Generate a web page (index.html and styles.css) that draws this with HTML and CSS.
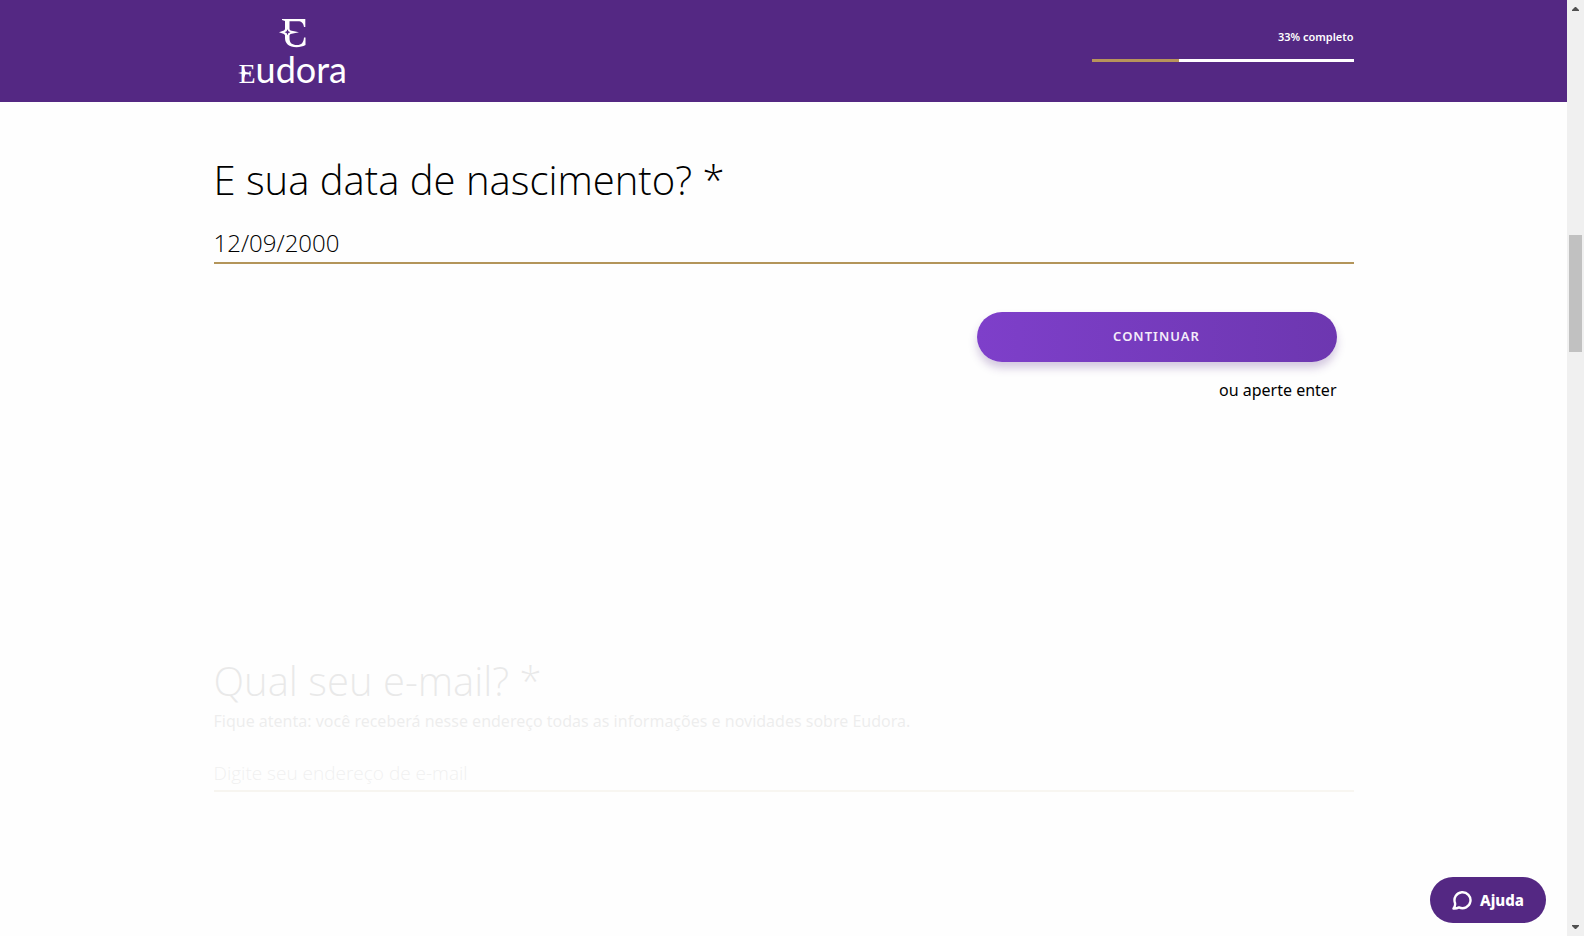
FILE: index.html
```html
<!DOCTYPE html>
<html lang="pt-BR">
<head>
<meta charset="utf-8">
<title>Eudora</title>
<link rel="stylesheet" href="styles.css">
</head>
<body>
<div class="window">
  <div class="page">
    <header class="header">
      <div class="container header-row">
        <div class="logo">
          <svg class="emblem" viewBox="0 0 28 29" aria-hidden="true">
            <path d="M3 0H26.300V8H25C24.500 4 22.500 2.200 19 2.200H10.500V10.300L11.500 11.400L20 13.200L11.500 15L10.500 16.200V19C10.500 24 13 26 18 26C22.500 26 24.600 23.500 25 18.500H26.500V26C24 27.400 21 28.200 17.500 28.200C10 28.200 6 24.500 6 19V16.200L5 15L0 13.200L5 11.400L6 10.300V2L3 1Z M8.500 10.200L7.600 12.300L5.500 13.200L7.600 14.100L8.500 16.200L9.400 14.100L11.500 13.200L9.400 12.300Z" fill-rule="evenodd"/>
          </svg>
          <div class="wordmark"><span class="wordmark-initial">E<svg class="spark" viewBox="0 0 14 10" aria-hidden="true"><path d="M0 5L4.500 4L6 0L7.500 4L14 5L7.500 6L6 10L4.500 6Z"/></svg></span>udora</div>
        </div>
        <div class="progress">
          <span class="progress-label" id="progress-label">33% completo</span>
          <div class="progress-track" role="progressbar" aria-labelledby="progress-label" aria-valuenow="33"><div class="progress-fill" style="width:33.333%"></div></div>
        </div>
      </div>
    </header>
    <main class="container">
      <section class="question">
        <label class="title" for="birth">E sua data de nascimento? *</label>
        <input class="field field-date" id="birth" type="text" value="12/09/2000">
        <div class="actions">
          <button class="continue" type="button">CONTINUAR</button>
          <span class="hint">ou aperte enter</span>
        </div>
      </section>
      <section class="question question-next">
        <label class="title" for="email">Qual seu e-mail? *</label>
        <p class="description">Fique atenta: você receberá nesse endereço todas as informações e novidades sobre Eudora.</p>
        <input class="field field-email" id="email" type="email" placeholder="Digite seu endereço de e-mail">
      </section>
    </main>
    <button class="help" type="button">
      <svg class="help-icon" viewBox="0 0 20 20" aria-hidden="true"><path d="M3 13A8 8 0 1 1 7 17.400Q4.500 18.800 1.500 18.600Q3.600 16 3 13Z"/></svg>
      Ajuda
    </button>
  </div>
  <div class="scrollbar" aria-hidden="true">
    <svg class="arrow" viewBox="0 0 7 4"><path d="M0 4V3L3 0H4L7 3V4Z"/></svg>
    <div class="rail"><div class="thumb"></div></div>
    <svg class="arrow" viewBox="0 0 7 4"><path d="M0 0V1L3 4H4L7 1V0Z"/></svg>
  </div>
</div>
</body>
</html>
```
FILE: styles.css
```css
* { box-sizing: border-box; }
body {
  margin: 0;
  background: #fefefe;
  color: #000;
  font-family: "Noto Sans", "Open Sans", sans-serif;
}
.window { display: grid; grid-template-columns: 1fr 17px; height: 100vh; overflow: hidden; }
.page { position: relative; overflow: hidden; }
.container { max-width: 1140px; margin: 0 auto; }
.header { background: #542883; height: 102px; }
.header-row { display: flex; justify-content: space-between; align-items: flex-start; }
.logo { display: flex; flex-direction: column; align-items: center; padding: 19px 0 0 25px; color: #fff; }
.emblem { width: 28px; height: 29px; fill: #fff; }
.wordmark { font: 400 36px/42px Lato, sans-serif; }
.wordmark-initial { position: relative; font: 400 28px/42px "Liberation Serif", serif; }
.spark { position: absolute; left: -1px; bottom: 11px; width: 14px; height: 10px; fill: #fff; }
.progress { width: 262px; padding-top: 27px; display: flex; flex-direction: column; gap: 12px; }
.progress-label { text-align: right; color: #fff; font-size: 11px; line-height: 20px; font-weight: 600; }
.progress-track { height: 3px; background: #fff; }
.progress-fill { height: 3px; background: #b8945a; }
.question { display: flex; flex-direction: column; padding-top: 50px; height: 501px; }
.question-next { opacity: 0.08; }
.title { font: 300 40px/56px "Open Sans", sans-serif; }
.field {
  width: 100%;
  margin: 20px 0 0;
  padding: 0 0 6px;
  height: 36px;
  border: 0;
  border-bottom: 2px solid #b3955a;
  background: transparent;
  color: #000;
  outline: none;
  font: 300 24px/28px "Open Sans", sans-serif;
}
.field-email { margin-top: 23px; padding: 0; font-size: 19px; }
.field-email::placeholder { color: #555; opacity: 1; }
.actions { display: flex; flex-direction: column; align-items: flex-end; gap: 16px; padding: 48px 17px 0 0; }
.continue {
  width: 360px;
  height: 50px;
  padding: 0 0 2px;
  border: 0;
  border-radius: 25px;
  background: linear-gradient(90deg, #7e3fca, #6d37b0);
  box-shadow: 0 6px 8px rgba(84, 40, 131, 0.25);
  color: #f4edfa;
  font: 600 13px/20px "Noto Sans", sans-serif;
  letter-spacing: 1px;
}
.hint { font-size: 16px; line-height: 24px; }
.description { margin: 0; color: #333; font-size: 16px; line-height: 24px; }
.help {
  position: absolute;
  right: 21px;
  bottom: 13px;
  display: flex;
  align-items: center;
  justify-content: center;
  gap: 8px;
  width: 116px;
  height: 46px;
  border: 0;
  border-radius: 23px;
  background: #542883;
  color: #fff;
  font: 800 15px/20px "Noto Sans", sans-serif;
}
.help-icon { width: 20px; height: 20px; fill: none; stroke: #fff; stroke-width: 2.4; stroke-linejoin: round; }
.scrollbar { display: flex; flex-direction: column; align-items: center; justify-content: space-between; padding: 7px 2px; background: #f0f0f0; }
.arrow { width: 7px; height: 4px; fill: #505050; }
.rail { width: 100%; flex: 1; padding-top: 224px; }
.thumb { height: 117px; background: #c1c1c1; }
```
